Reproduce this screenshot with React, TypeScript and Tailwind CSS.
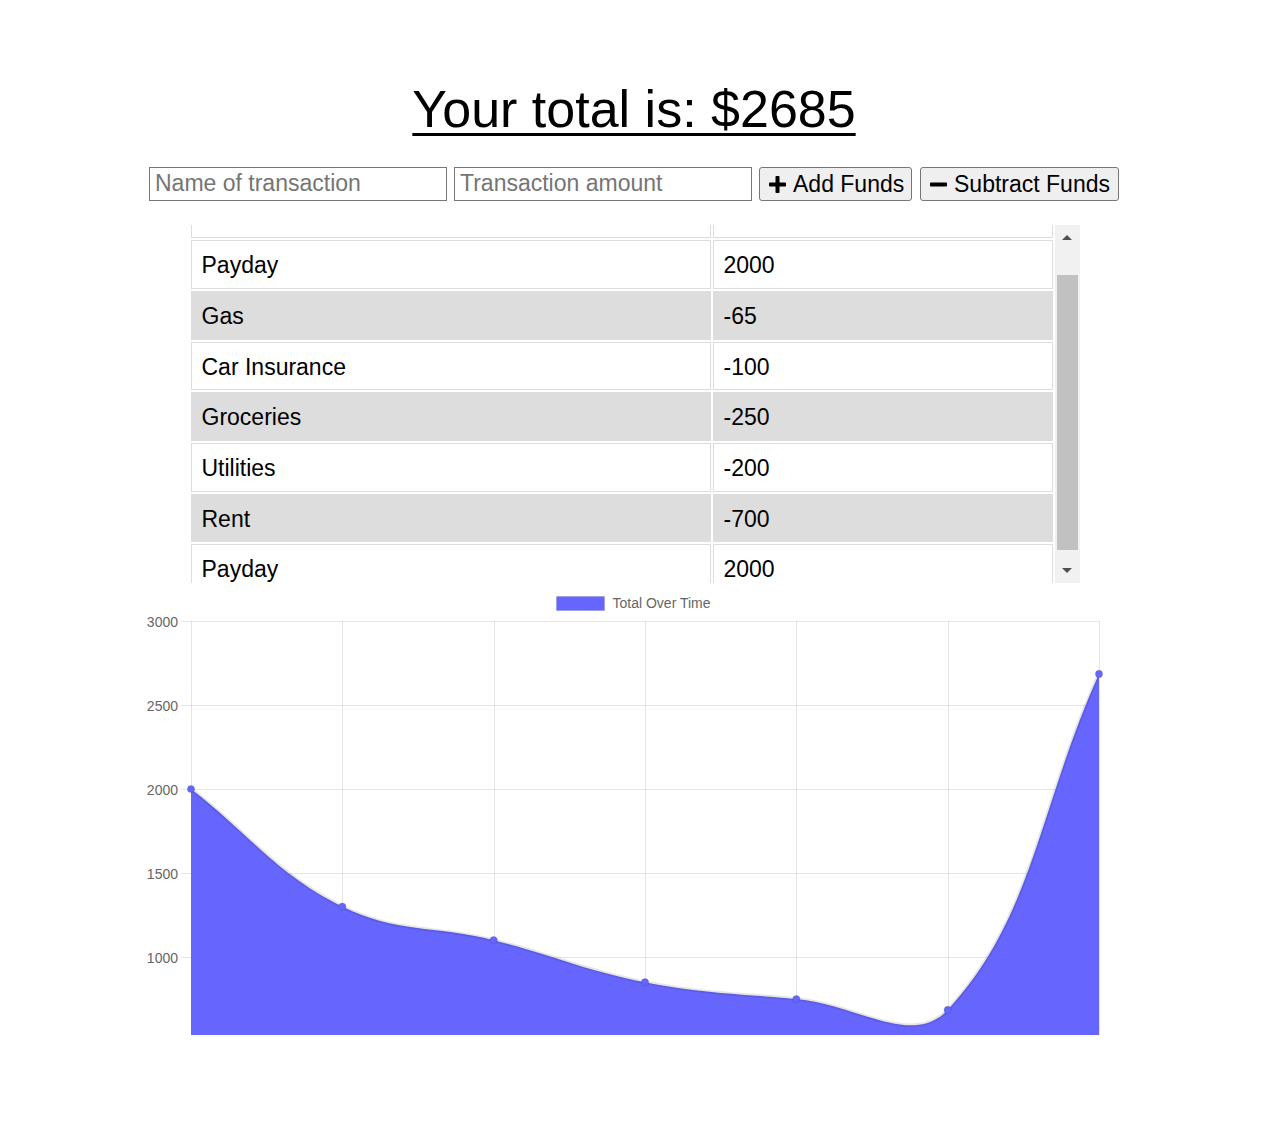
import React from "react";

type Tx = { name: string; value: number };

// Newest first, as listed in the ledger table
const transactions: Tx[] = [
  { name: "Payday", value: 2000 },
  { name: "Gas", value: -65 },
  { name: "Car Insurance", value: -100 },
  { name: "Groceries", value: -250 },
  { name: "Utilities", value: -200 },
  { name: "Rent", value: -700 },
  { name: "Payday", value: 2000 },
];

const FONT = "'Liberation Sans', Arial, Helvetica, sans-serif";

function runningTotals(list: Tx[]): number[] {
  const out: number[] = [];
  let sum = 0;
  [...list].reverse().forEach((t) => {
    sum += t.value;
    out.push(sum);
  });
  return out;
}

type Pt = { x: number; y: number };

// Chart.js-style spline control points (tension 0.4)
function controlPoints(pts: Pt[], t = 0.4) {
  return pts.map((cur, i) => {
    const prev = pts[i - 1] ?? cur;
    const next = pts[i + 1] ?? cur;
    const d01 = Math.hypot(cur.x - prev.x, cur.y - prev.y);
    const d12 = Math.hypot(next.x - cur.x, next.y - cur.y);
    let s01 = d01 / (d01 + d12);
    let s12 = d12 / (d01 + d12);
    if (isNaN(s01)) s01 = 0;
    if (isNaN(s12)) s12 = 0;
    const fa = t * s01;
    const fb = t * s12;
    return {
      prev: { x: cur.x - fa * (next.x - prev.x), y: cur.y - fa * (next.y - prev.y) },
      next: { x: cur.x + fb * (next.x - prev.x), y: cur.y + fb * (next.y - prev.y) },
    };
  });
}

function PlusIcon() {
  return (
    <svg width="17" height="17" viewBox="0 0 17 17" aria-hidden>
      <rect x="6.5" y="0" width="4" height="17" rx="0.8" fill="#000" />
      <rect x="0" y="6.5" width="17" height="4" rx="0.8" fill="#000" />
    </svg>
  );
}

function MinusIcon() {
  return (
    <svg width="17" height="17" viewBox="0 0 17 17" aria-hidden>
      <rect x="0" y="6.5" width="17" height="4" rx="0.8" fill="#000" />
    </svg>
  );
}

function TotalChart({ values }: { values: number[] }) {
  const LEFT = 191;
  const RIGHT = 1099;
  const TOP = 621;
  const PER = 84 / 500;
  const step = (RIGHT - LEFT) / (values.length - 1);
  const yFor = (v: number) => TOP + (3000 - v) * PER;
  const pts: Pt[] = values.map((v, i) => ({ x: LEFT + i * step, y: yFor(v) }));
  const cps = controlPoints(pts);

  let line = `M ${pts[0].x} ${pts[0].y}`;
  for (let i = 1; i < pts.length; i++) {
    const a = cps[i - 1].next;
    const b = cps[i].prev;
    line += ` C ${a.x} ${a.y} ${b.x} ${b.y} ${pts[i].x} ${pts[i].y}`;
  }
  const BOTTOM = 1125;
  const area = `${line} L ${RIGHT} ${BOTTOM} L ${LEFT} ${BOTTOM} Z`;
  const ticks = [3000, 2500, 2000, 1500, 1000, 500];
  const grid = "rgba(0,0,0,0.1)";

  return (
    <svg width="980" height="447" viewBox="144 588 980 447" className="block mx-auto">
      {/* legend */}
      <rect x="556.5" y="596.5" width="48" height="14" fill="#6666ff" stroke={grid} strokeWidth="1" />
      <text x="612.5" y="608" fontFamily={FONT} fontSize="14" fill="#666">
        Total Over Time
      </text>

      {/* horizontal grid and y labels */}
      {ticks.map((v) => {
        const y = Math.round(yFor(v)) + 0.5;
        return (
          <g key={v}>
            <line x1={181} x2={RIGHT} y1={y} y2={y} stroke={grid} strokeWidth="1" />
            <text
              x={178}
              y={y + 5}
              textAnchor="end"
              fontFamily={FONT}
              fontSize="14"
              fill="#666"
            >
              {v}
            </text>
          </g>
        );
      })}

      {/* vertical grid */}
      {pts.map((p, i) => {
        const x = Math.round(p.x) + 0.5;
        return <line key={i} x1={x} x2={x} y1={TOP} y2={BOTTOM} stroke={grid} strokeWidth="1" />;
      })}

      {/* filled area and border line */}
      <path d={area} fill="#6666ff" />
      <path d={line} fill="none" stroke={grid} strokeWidth="3.6" />

      {/* data points */}
      {pts.map((p, i) => (
        <circle key={i} cx={p.x} cy={p.y} r="3.6" fill="#6666ff" stroke={grid} strokeWidth="1.2" />
      ))}
    </svg>
  );
}

function ScrollTriangle({ down }: { down?: boolean }) {
  return (
    <svg width="10" height="5" viewBox="0 0 10 5" aria-hidden>
      {down ? <polygon points="0,0 10,0 5,5" fill="#505050" /> : <polygon points="0,5 10,5 5,0" fill="#505050" />}
    </svg>
  );
}

export default function App() {
  const totals = runningTotals(transactions);
  const total = totals[totals.length - 1];

  return (
    <div className="w-[1268px] bg-white pt-[80px] text-black" style={{ fontFamily: FONT }}>
      <h1 className="text-center text-[52px] leading-[59.7px] font-normal underline decoration-[3px] underline-offset-[6px]">
        Your total is: ${total}
      </h1>

      <div className="mt-[27.3px] flex justify-center">
        <input
          placeholder="Name of transaction"
          className="h-[34px] w-[298px] border border-[#767676] bg-white px-[5px] pb-[2px] text-[23px] placeholder:text-[#757575] outline-none"
        />
        <input
          placeholder="Transaction amount"
          className="ml-[7px] h-[34px] w-[298px] border border-[#767676] bg-white px-[5px] pb-[2px] text-[23px] placeholder:text-[#757575] outline-none"
        />
        <button className="ml-[7px] flex h-[34px] w-[153px] items-center gap-[7px] rounded-[3px] border border-[#767676] bg-[#efefef] pl-[9px] text-[23px] leading-none">
          <PlusIcon />
          <span>Add Funds</span>
        </button>
        <button className="ml-[8px] flex h-[34px] w-[199px] items-center gap-[7px] rounded-[3px] border border-[#767676] bg-[#efefef] pl-[9px] text-[23px] leading-none">
          <MinusIcon />
          <span>Subtract Funds</span>
        </button>
      </div>

      {/* ledger with its scroll bar */}
      <div className="mx-auto mt-[24px] flex h-[358px] w-[891px]">
        <div className="h-full flex-1 overflow-hidden">
          <table className="mt-[-37.3px] w-full border-separate border-spacing-[2px] text-[23px]">
            <thead>
              <tr>
                <th className="w-[520px] border border-[#dddddd] pt-[11px] pb-[9px] pl-[10px] text-left font-bold leading-[26.67px]">
                  Transaction
                </th>
                <th className="border border-[#dddddd] pt-[11px] pb-[9px] pl-[10px] text-left font-bold leading-[26.67px]">
                  Amount
                </th>
              </tr>
            </thead>
            <tbody>
              {transactions.map((t, i) => (
                <tr key={i} className={i % 2 === 1 ? "bg-[#dddddd]" : "bg-white"}>
                  <td className="border border-[#dddddd] pt-[11px] pb-[9px] pl-[10px] leading-[26.67px]">
                    {t.name}
                  </td>
                  <td className="border border-[#dddddd] pt-[11px] pb-[9px] pl-[10px] leading-[26.67px]">
                    {t.value}
                  </td>
                </tr>
              ))}
            </tbody>
          </table>
        </div>
        <div className="flex h-full w-[25px] flex-col bg-[#f1f1f1]">
          <div className="flex h-[25px] items-center justify-center">
            <ScrollTriangle />
          </div>
          <div className="flex flex-1 flex-col px-[2px] pt-[25px] pb-[8px]">
            <div className="flex-1 bg-[#c1c1c1]" />
          </div>
          <div className="flex h-[25px] items-center justify-center">
            <ScrollTriangle down />
          </div>
        </div>
      </div>

      <div className="mt-[5px] pb-[105px]">
        <TotalChart values={totals} />
      </div>
    </div>
  );
}
